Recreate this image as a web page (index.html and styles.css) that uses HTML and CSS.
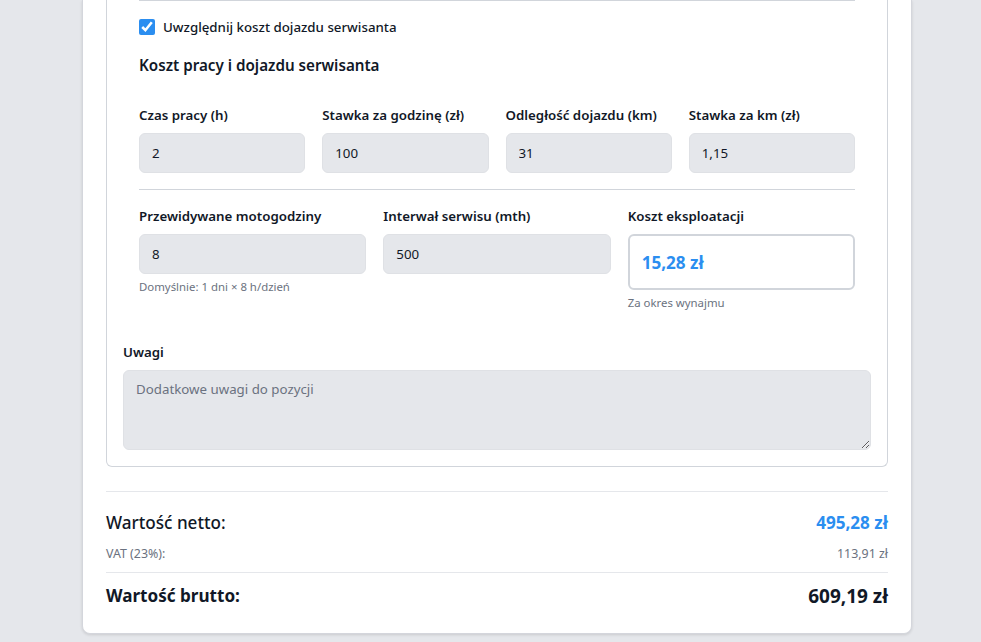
FILE: index.html
```html
<!DOCTYPE html>
<html lang="pl">
<head>
<meta charset="utf-8">
<title>Pozycja</title>
<link rel="stylesheet" href="styles.css">
</head>
<body>
<div class="page">
  <div class="card">
    <div class="item-box">
      <div class="service-section">
        <label class="check-row">
          <input type="checkbox" class="check" checked>
          <span>Uwzględnij koszt dojazdu serwisanta</span>
        </label>
        <h3 class="section-title">Koszt pracy i dojazdu serwisanta</h3>
        <div class="grid4">
          <div class="field">
            <div class="label">Czas pracy (h)</div>
            <input class="input" type="text" value="2">
          </div>
          <div class="field">
            <div class="label">Stawka za godzinę (zł)</div>
            <input class="input" type="text" value="100">
          </div>
          <div class="field">
            <div class="label">Odległość dojazdu (km)</div>
            <input class="input" type="text" value="31">
          </div>
          <div class="field">
            <div class="label">Stawka za km (zł)</div>
            <input class="input" type="text" value="1,15">
          </div>
        </div>
        <div class="divider"></div>
        <div class="grid3">
          <div class="field">
            <div class="label">Przewidywane motogodziny</div>
            <input class="input" type="text" value="8">
            <div class="hint">Domyślnie: 1 dni × 8 h/dzień</div>
          </div>
          <div class="field">
            <div class="label">Interwał serwisu (mth)</div>
            <input class="input" type="text" value="500">
          </div>
          <div class="field">
            <div class="label">Koszt eksploatacji</div>
            <div class="cost-box">15,28 zł</div>
            <div class="hint">Za okres wynajmu</div>
          </div>
        </div>
      </div>
      <div class="notes">
        <div class="label">Uwagi</div>
        <textarea class="textarea" placeholder="Dodatkowe uwagi do pozycji"></textarea>
      </div>
    </div>
    <div class="totals">
      <div class="total-row netto">
        <span>Wartość netto:</span>
        <span class="blue">495,28 zł</span>
      </div>
      <div class="total-row vat">
        <span>VAT (23%):</span>
        <span>113,91 zł</span>
      </div>
      <div class="total-row brutto">
        <span>Wartość brutto:</span>
        <span class="brutto-val">609,19 zł</span>
      </div>
    </div>
  </div>
</div>
</body>
</html>
```
FILE: styles.css
```css
* { box-sizing: border-box; }
html, body {
  margin: 0;
  padding: 0;
  background: #e5e7eb;
  font-family: "Noto Sans", "Open Sans", sans-serif;
  color: #111827;
}
.page {
  padding-left: 82px;
  height: 642px;
  overflow: hidden;
}
.card {
  width: 830px;
  background: #fff;
  border: 1px solid #d4d6dc;
  border-top: none;
  border-radius: 0 0 8px 8px;
  box-shadow: 0 1px 3px rgba(0,0,0,0.12);
  padding: 0 23px 23px;
}
.item-box {
  border: 1px solid #d1d5db;
  border-top: none;
  border-radius: 0 0 6px 6px;
  padding: 0 16px 16px;
}
.service-section {
  padding: 0 16px 16px;
}
.service-section::before {
  content: "";
  display: block;
  height: 1px;
  background: #d1d5db;
}
.check-row {
  display: flex;
  align-items: center;
  gap: 8px;
  margin-top: 16px;
  font-size: 13.3px;
  font-weight: 500;
  height: 20px;
}
.check {
  margin: 0;
  width: 16px;
  height: 16px;
  accent-color: #2b8ef0;
}
.section-title {
  margin: 16px 0 28px;
  font-size: 15.2px;
  line-height: 24px;
  font-weight: 600;
}
.grid4 {
  display: grid;
  grid-template-columns: repeat(4, 1fr);
  gap: 17px;
}
.grid3 {
  display: grid;
  grid-template-columns: repeat(3, 1fr);
  gap: 17px;
}
.field {
  display: flex;
  flex-direction: column;
}
.label {
  font-size: 13.3px;
  line-height: 20px;
  font-weight: 600;
  margin-bottom: 8px;
}
.input {
  height: 40px;
  border: 1px solid #dfe1e5;
  background: #e5e7eb;
  border-radius: 6px;
  padding: 0 12px;
  font-family: inherit;
  font-size: 13.3px;
  color: #111827;
  width: 100%;
}
.divider {
  height: 1px;
  background: #d1d5db;
  margin: 16px 0;
}
.hint {
  font-size: 11.4px;
  line-height: 16px;
  color: #6b7280;
  margin-top: 5px;
}
.cost-box {
  height: 56px;
  border: 2px solid #d1d5db;
  border-radius: 6px;
  background: #fff;
  display: flex;
  align-items: center;
  padding: 0 12px;
  font-size: 17.1px;
  font-weight: 700;
  color: #2b8ef0;
}
.notes {
  margin-top: 15px;
}
.textarea {
  display: block;
  width: 100%;
  height: 80px;
  border: 1px solid #dfe1e5;
  background: #e5e7eb;
  border-radius: 6px;
  padding: 8px 12px;
  font-family: inherit;
  font-size: 13.3px;
  line-height: 20px;
  color: #111827;
  resize: vertical;
}
.textarea::placeholder {
  color: #6b7280;
}
.totals {
  margin-top: 24px;
  border-top: 1px solid #e5e7eb;
}
.total-row {
  display: flex;
  justify-content: space-between;
  align-items: center;
}
.netto {
  margin-top: 17px;
  font-size: 17.1px;
  line-height: 28px;
  font-weight: 500;
}
.blue {
  color: #2b8ef0;
  font-weight: 700;
}
.vat {
  font-size: 12.4px;
  line-height: 20px;
  color: #6b7280;
  margin-top: 7px;
  padding-bottom: 8px;
  border-bottom: 1px solid #e5e7eb;
}
.brutto {
  margin-top: 9px;
  font-size: 17.1px;
  line-height: 28px;
  font-weight: 700;
}
.brutto-val {
  font-size: 19px;
}
```
